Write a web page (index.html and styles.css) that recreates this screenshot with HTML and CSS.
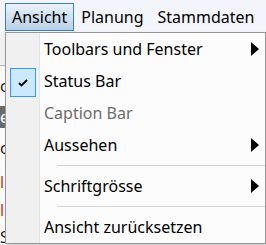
FILE: index.html
```html
<!DOCTYPE html>
<html lang="de">
<head>
    <meta charset="UTF-8">
    <meta name="viewport" content="width=device-width, initial-scale=1.0">
    <link rel="stylesheet" href="styles.css">
</head>
<body>
    <div class="menubar">
        <span class="top-item open">Ansicht</span>
        <span class="top-item">Planung</span>
        <span class="top-item">Stammdaten</span>
    </div>

    <div class="workspace">
        <div class="ws-row ws-head"></div>
        <div class="ws-row ws-tall">c</div>
        <div class="ws-row ws-dark">e</div>
        <div class="ws-row ws-tall">c</div>
        <div class="ws-row ws-red">l</div>
        <div class="ws-row ws-red">l</div>
        <div class="ws-row">S</div>
    </div>

    <div class="menu">
        <div class="menu-item">
            <span class="icon"></span>
            <span class="label">Toolbars und Fenster</span>
            <span class="arrow"></span>
        </div>
        <div class="menu-item">
            <span class="icon checked">
                <svg width="10" height="8" viewBox="0 0 10 8"><path d="M1 4 L3.5 6.5 L9 1" fill="none" stroke="#000" stroke-width="1.8"/></svg>
            </span>
            <span class="label">Status Bar</span>
        </div>
        <div class="menu-item disabled">
            <span class="icon"></span>
            <span class="label">Caption Bar</span>
        </div>
        <div class="menu-item">
            <span class="icon"></span>
            <span class="label">Aussehen</span>
            <span class="arrow"></span>
        </div>
        <div class="separator"></div>
        <div class="menu-item">
            <span class="icon"></span>
            <span class="label">Schriftgrösse</span>
            <span class="arrow"></span>
        </div>
        <div class="separator"></div>
        <div class="menu-item">
            <span class="icon"></span>
            <span class="label">Ansicht zurücksetzen</span>
        </div>
    </div>
</body>
</html>
```

FILE: styles.css
```css
body {
    margin: 0;
    width: 266px;
    height: 245px;
    overflow: hidden;
    background-color: #fff;
    font-family: 'Noto Sans', 'Open Sans', sans-serif;
    font-size: 16px;
    color: #000;
    position: relative;
}

.menubar {
    height: 32px;
    display: flex;
    align-items: flex-start;
    padding-left: 5px;
    background-color: #f4f5fa;
    box-sizing: border-box;
}

.top-item {
    height: 28px;
    margin-top: 3px;
    line-height: 26px;
    padding: 0 6px;
    border: 1px solid transparent;
    box-sizing: border-box;
    white-space: nowrap;
}

.top-item.open {
    border-color: #3c7fb1;
    background: linear-gradient(#eaf2fa, #b9d1e8);
}

.workspace {
    background-color: #fafafa;
}

.ws-row {
    height: 26px;
    line-height: 26px;
    color: #222;
}

.ws-head {
    height: 33px;
    background-color: #f0f0f0;
    border-bottom: 1px solid #b8b8c4;
}

.ws-tall {
    height: 40px;
    line-height: 40px;
}

.ws-dark {
    height: 22px;
    line-height: 22px;
    background-color: #6b6b6b;
    color: #fff;
}

.ws-red {
    height: 28px;
    line-height: 28px;
    color: #c0392b;
}

.menu {
    position: absolute;
    left: 5px;
    top: 32px;
    width: 259px;
    border: 1px solid #979797;
    background: linear-gradient(to right, #f0f0f0 0 33px, #e2e3e3 33px 34px, #fcfcfc 34px);
    box-shadow: 2px 2px 3px rgba(0, 0, 0, 0.2);
}

.menu-item {
    height: 32px;
    display: grid;
    grid-template-columns: 38px 1fr 8px;
    align-items: center;
    padding-right: 6px;
}

.menu-item.disabled {
    color: #6d6d6d;
}

.icon {
    display: flex;
    align-items: center;
    justify-content: center;
    height: 29px;
    width: 26px;
    margin-left: 4px;
    margin-top: 3px;
    box-sizing: border-box;
}

.icon.checked {
    background-color: #cce8ff;
    border: 1px solid #3399ff;
}

.label {
    white-space: nowrap;
}

.arrow {
    width: 0;
    height: 0;
    border-top: 7px solid transparent;
    border-bottom: 7px solid transparent;
    border-left: 8px solid #000;
}

.separator {
    height: 9px;
    margin-left: 51px;
    display: flex;
    align-items: center;
}

.separator::after {
    content: "";
    flex: 1;
    border-top: 1px solid #d4d4d4;
}
```
